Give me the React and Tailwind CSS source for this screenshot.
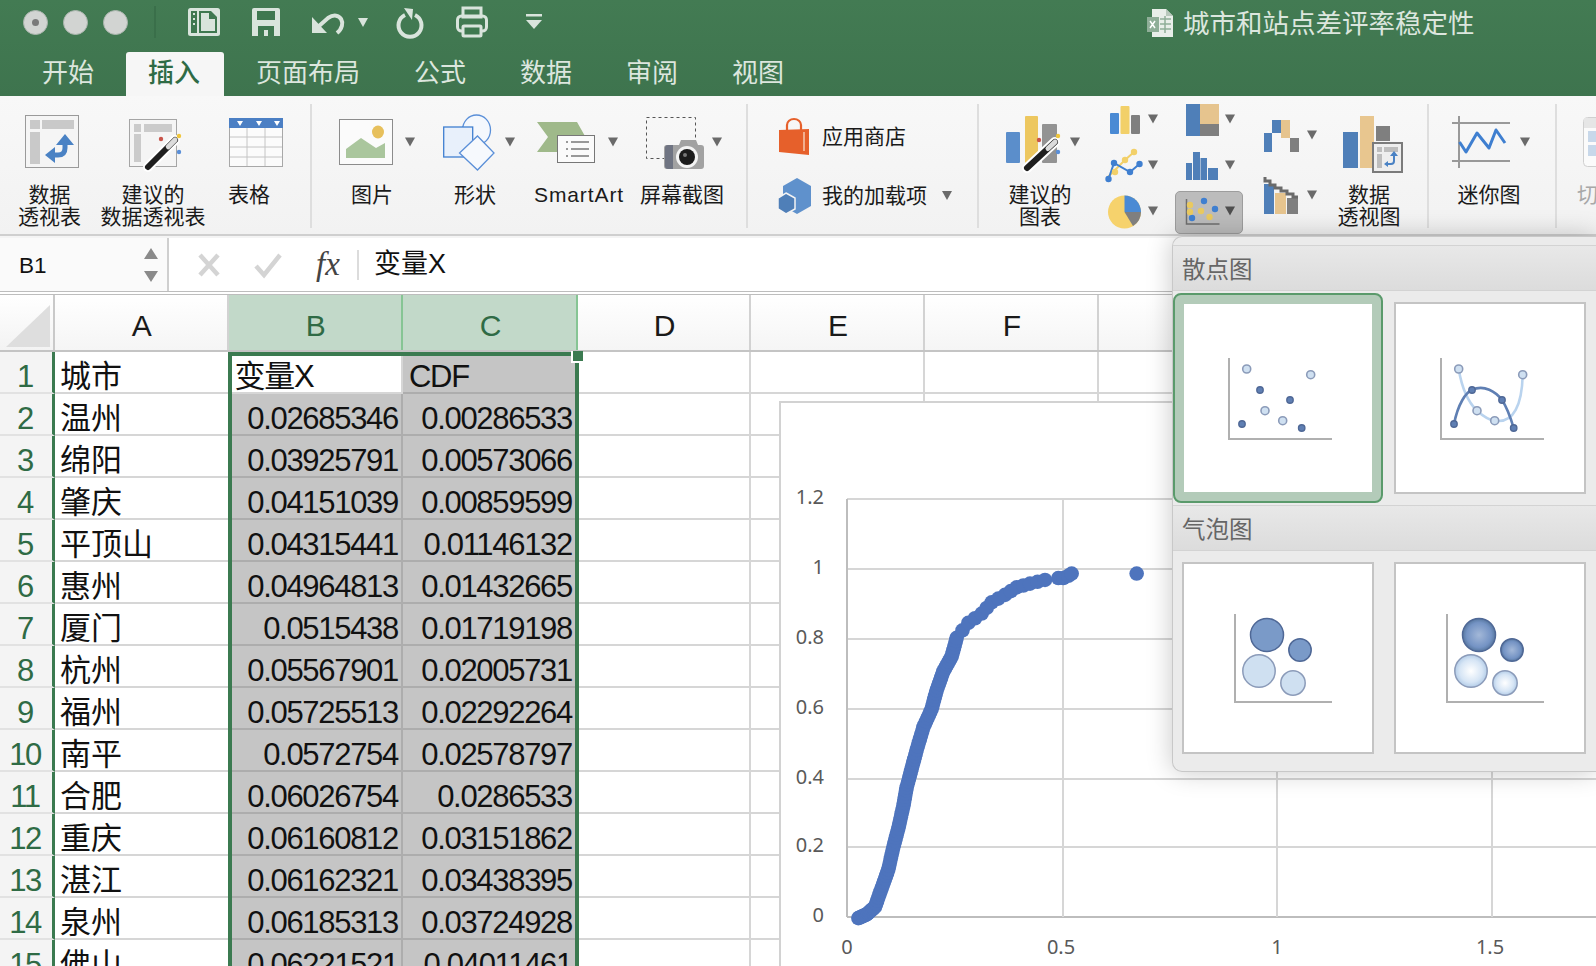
const F = "#d9e4dc";
const blue = "#4f7fb8", tan = "#e6c48e", gray = "#7f7f7f";

function Ic({ x, y, w, h, children }) {
  return <svg width={w} height={h} viewBox={`${x} ${y} ${w} ${h}`} className="block shrink-0">{children}</svg>;
}
function Caret({ x, y, c = "#6a6a6a" }) {
  return <path d={`M${x - 5} ${y - 4.5}h10l-5 9z`} fill={c} />;
}
function Sep({ cls }) {
  return <div className={`w-[2px] h-[124px] mt-[8px] bg-[#dedede] shrink-0 ${cls}`} />;
}
function Btn({ x, w, label, pad = "", children }) {
  return (
    <div className="shrink-0 flex flex-col pt-[8px]" style={{ width: w }}>
      <Ic x={x} y={104} w={w} h={80}>{children}</Ic>
      <div className={`text-center text-[21px] leading-[22px] text-[#1a1a1a] whitespace-nowrap ${pad}`}>
        {label.map((l) => <div key={l}>{l}</div>)}
      </div>
    </div>
  );
}
function Wand({ x1, y1, x2, y2 }) {
  return (
    <g strokeLinecap="round">
      <line x1={x1} y1={y1} x2={x2} y2={y2} stroke="#fff" strokeWidth="10" />
      <line x1={x1} y1={y1} x2={x2} y2={y2} stroke="#1f1f1f" strokeWidth="6" />
      <line x1={x1 + (x2 - x1) * 0.75} y1={y1 + (y2 - y1) * 0.75} x2={x2} y2={y2} stroke="#dcdcdc" strokeWidth="5" />
    </g>
  );
}
function Dots({ pts }) {
  return pts.map(([x, y, c], i) => <circle key={i} cx={x} cy={y} r="3.2" fill={c} />);
}

function TitleBar() {
  return (
    <div className="h-[55px] flex items-start relative">
      <div className="w-[156px] h-[44px] flex items-center shrink-0 relative">
        <div className="ml-[23px] w-[25px] h-[25px] rounded-full bg-[#d2d4d2] border border-[#aab5ad] flex items-center justify-center">
          <div className="w-[7px] h-[7px] rounded-full bg-[#7a7a7a]" />
        </div>
        <div className="ml-[15px] w-[25px] h-[25px] rounded-full bg-[#d2d4d2] border border-[#aab5ad]" />
        <div className="ml-[15px] w-[25px] h-[25px] rounded-full bg-[#d2d4d2] border border-[#aab5ad]" />
        <div className="absolute right-0 top-[6px] w-[2px] h-[32px] bg-[#3a6f4a]" />
      </div>
      <Ic x={156} y={0} w={400} h={44}>
        <rect x="188" y="8" width="32" height="28" rx="2.5" fill={F} />
        <path d="M199 11h12l6 6v16h-18z" fill="#3f7850" />
        <path d="M201 13h8v6h6v12h-14z" fill={F} />
        <rect x="191" y="11" width="6" height="22" fill="#3f7850" />
        <path d="M193 14h2M193 19h2M193 24h2" stroke={F} strokeWidth="2" />
        <path d="M252 10a2 2 0 0 1 2-2h24a2 2 0 0 1 2 2v26h-28z" fill={F} />
        <rect x="257" y="11" width="18" height="9" fill="#3f7850" />
        <rect x="258" y="26" width="16" height="10" fill="#3f7850" />
        <rect x="264" y="30" width="4" height="6" fill={F} />
        <path d="M312 17v16h15z" fill={F} />
        <path d="M319 26l9-8c12-8 20 6 9 15" fill="none" stroke={F} strokeWidth="4" />
        <path d="M358 18h10l-5 9z" fill={F} />
        <path d="M405 15a11.5 11.5 0 1 0 10 0" fill="none" stroke={F} strokeWidth="4" />
        <path d="M404 8l9 1-1 11z" fill={F} />
        <rect x="457.5" y="16" width="29" height="15" rx="4" fill="none" stroke={F} strokeWidth="3" />
        <rect x="463" y="8" width="18" height="9" fill="none" stroke={F} strokeWidth="3" />
        <rect x="463" y="26" width="18" height="10" rx="1" fill="#3f7850" stroke={F} strokeWidth="3" />
        <rect x="526" y="14" width="16" height="2.5" fill={F} />
        <path d="M526 20h16l-8 9z" fill={F} />
      </Ic>
      <div className="absolute left-[1147px] top-0 h-[46px] flex items-center">
        <Ic x={1147} y={6} w={28} h={32}>
          <path d="M1152 8h14l7 7v21h-21z" fill="#e8eee9" />
          <path d="M1166 8v7h7" fill="#b8c8bc" />
          <path d="M1160 18h11M1160 23h11M1160 28h11M1165 15v17" stroke="#8fae98" strokeWidth="1.5" />
          <rect x="1147" y="16" width="12" height="15" fill="#8fae98" />
          <path d="M1150 20l5 7M1155 20l-5 7" stroke="#fff" strokeWidth="1.5" />
        </Ic>
        <span className="ml-[8px] mt-[2px] text-[26.5px] text-[#dce6de] leading-none">城市和站点差评率稳定性</span>
      </div>
    </div>
  );
}

function Tabs() {
  const tabs = ["开始", "插入", "页面布局", "公式", "数据", "审阅", "视图"];
  return (
    <div className="h-[41px] flex items-end pl-[20px] gap-[10px]">
      {tabs.map((t) => (
        <div
          key={t}
          className={
            t === "插入"
              ? "h-[44px] -mt-[3px] pl-[22px] pr-[24px] bg-[#f6f6f6] rounded-t-[3px] text-[26px] leading-[42px] text-[#2f6b45] font-medium"
              : "h-[41px] px-[22px] text-[26px] leading-[36px] text-[#dce6de]"
          }
        >
          {t}
        </div>
      ))}
    </div>
  );
}

function Ribbon() {
  return (
    <div className="h-[140px] flex overflow-hidden bg-gradient-to-b from-[#f8f8f8] to-[#f2f2f2] border-b-2 border-[#cfcfcf]">
      <Btn x={0} w={99} label={["数据", "透视表"]}>
        <rect x="25.5" y="115.5" width="53" height="52" fill="#f5f5f5" stroke="#9a9a9a" />
        <path d="M30 120h10v9H30zM42 120h32v9H42zM30 132h10v32H30z" fill="#c9c9c9" />
        <path d="M65 142v6q0 7-7 7h-6" fill="none" stroke="#4a82c4" strokeWidth="5" />
        <path d="M65 134l9 11H56zM45 155l10-8v16z" fill="#4a82c4" />
      </Btn>
      <Btn x={99} w={108} label={["建议的", "数据透视表"]}>
        <rect x="129.5" y="119.5" width="47" height="47" fill="#f5f5f5" stroke="#a5a5a5" />
        <path d="M134 124h7v8h-7zM144 124h28v8h-28zM134 134h7v28h-7z" fill="#cbcbcb" />
        <Wand x1={148} y1={167} x2={175} y2={140} />
        <circle cx="161" cy="139" r="2.2" fill="#c9544a" />
        <circle cx="179" cy="136" r="2.2" fill="#f0c63c" />
        <circle cx="179" cy="152" r="2.2" fill="#5a8fd8" />
      </Btn>
      <Btn x={207} w={84} label={["表格"]}>
        <rect x="229.5" y="118.5" width="53" height="48" fill="#fbfbfb" stroke="#a8a8a8" />
        <rect x="229" y="118" width="54" height="10" fill="#4b7fc4" />
        <path d="M237 121h6l-3 5zM256 121h6l-3 5zM274 121h6l-3 5z" fill="#fff" />
        <path d="M247 128v38M265 128v38M230 137h52M230 147h52M230 157h52" stroke="#c4c4c4" />
      </Btn>
      <Sep cls="ml-[19px]" />
      <Btn x={312} w={120} label={["图片"]}>
        <rect x="339.5" y="119.5" width="53" height="45" fill="#fbfbfb" stroke="#8c8c8c" />
        <path d="M346 158v-9l15-11 15 10 9-5v15z" fill="#aac69d" />
        <ellipse cx="378" cy="132" rx="6" ry="6.5" fill="#e7c05c" />
        <Caret x={410} y={142} />
      </Btn>
      <Btn x={432} w={86} label={["形状"]}>
        <ellipse cx="476.5" cy="130" rx="14" ry="15" fill="#f4f8fd" stroke="#5a8fd8" strokeWidth="1.3" />
        <rect x="443.7" y="127" width="29" height="30" fill="#e8f0fb" stroke="#3f7fd0" strokeWidth="1.3" />
        <path d="M477.5 136l16.5 17-16.5 17-18-17z" fill="#f6f9fd" stroke="#5a8fd8" strokeWidth="1.3" />
        <Caret x={510} y={142} />
      </Btn>
      <Btn x={518} w={122} label={["SmartArt"]} pad="tracking-[0.9px]">
        <path d="M537 122h40l17 30h-57l11-15z" fill="#9fb98a" />
        <rect x="557.5" y="135.5" width="37" height="27" fill="#fbfbfb" stroke="#777" />
        <path d="M566 142h2M571 142h18M566 149h2M571 149h18M566 156h2M571 156h18" stroke="#999" strokeWidth="2" />
        <Caret x={613} y={142} />
      </Btn>
      <Btn x={640} w={84} label={["屏幕截图"]}>
        <rect x="646.5" y="117.5" width="49" height="41" fill="none" stroke="#555" strokeDasharray="3 3" />
        <path d="M667 145h12l2-5h15l2 5h3a3 3 0 0 1 3 3v18a3 3 0 0 1-3 3h-34a3 3 0 0 1-3-3v-18a3 3 0 0 1 3-3z" fill="#a2a2a2" />
        <path d="M665 148a3 3 0 0 1 3-3h5v24h-5a3 3 0 0 1-3-3z" fill="#6f7482" />
        <circle cx="687" cy="157" r="11" fill="#f4f4f4" />
        <circle cx="687" cy="157" r="8" fill="#1c1c1c" />
        <circle cx="685" cy="155" r="2" fill="#777" />
        <Caret x={717} y={142} />
      </Btn>
      <Sep cls="ml-[22px]" />
      <div className="w-[229px] shrink-0 flex flex-col">
        <div className="h-[59px] mt-[11px] flex items-center">
          <div className="ml-[31px]">
            <Ic x={779} y={115} w={31} h={40}>
              <path d="M787 128v-5a7 6 0 0 1 14 0v5" fill="none" stroke="#e6602b" strokeWidth="2.2" />
              <path d="M779 128l30-1v26l-30-3z" fill="#e6602b" />
              <path d="M804 130v19" stroke="#f6c9b0" strokeWidth="1.5" />
            </Ic>
          </div>
          <span className="ml-[12px] text-[21px] text-[#1a1a1a]">应用商店</span>
        </div>
        <div className="h-[59px] flex items-center">
          <div className="ml-[30px]">
            <Ic x={778} y={176} w={34} h={40}>
              <path d="M797 178l14 8v20l-14 8-14-8v-20z" fill="#5f91cc" />
              <path d="M786 193l9 5v11l-9 5-8-5v-11z" fill="#4f7fb8" stroke="#f4f4f4" strokeWidth="1.5" />
            </Ic>
          </div>
          <span className="ml-[10px] text-[21px] text-[#1a1a1a]">我的加载项</span>
          <svg width="12" height="10" viewBox="0 0 12 10" className="ml-[14px]"><path d="M1 0h10l-5 9z" fill="#6a6a6a" /></svg>
        </div>
      </div>
      <Sep cls="" />
      <Btn x={979} w={122} label={["建议的", "图表"]}>
        <rect x="1006" y="132" width="14" height="31" rx="1" fill="#5b8ecb" />
        <rect x="1025" y="116" width="13" height="47" rx="1" fill="#edc75f" />
        <rect x="1042" y="124" width="15" height="39" rx="1" fill="#939393" />
        <Wand x1={1027} y1={168} x2={1055} y2={142} />
        <circle cx="1039" cy="140" r="2.2" fill="#c9544a" />
        <circle cx="1058" cy="136" r="2.2" fill="#f0c63c" />
        <circle cx="1058" cy="152" r="2.2" fill="#5a8fd8" />
        <Caret x={1075} y={142} />
      </Btn>
      <div className="w-[74px] shrink-0 flex flex-col">
        <Ic x={1101} y={96} w={74} h={46}>
          <rect x="1110" y="113" width="9" height="21" rx="1" fill="#4a8ad4" />
          <rect x="1120.5" y="106" width="9" height="28" rx="1" fill="#f2d069" />
          <rect x="1131" y="115" width="9" height="19" rx="1" fill="#7f7f7f" />
          <Caret x={1153} y={119} />
        </Ic>
        <Ic x={1101} y={142} w={74} h={46}>
          <path d="M1107 178l18-18 9-8" fill="none" stroke="#f2d069" strokeWidth="2" />
          <path d="M1108.5 179l5.5-16 16 9 9.5-8" fill="none" stroke="#3f7fd0" strokeWidth="2" />
          <Dots pts={[[1115, 172, "#f2d069"], [1125, 160, "#f2d069"], [1134, 152, "#f2d069"], [1108.5, 179, "#3f7fd0"], [1114, 163, "#3f7fd0"], [1130, 172, "#3f7fd0"], [1139.5, 164, "#3f7fd0"]]} />
          <Caret x={1153} y={165} />
        </Ic>
        <Ic x={1101} y={188} w={74} h={46}>
          <circle cx="1124.5" cy="212" r="16.5" fill="#f6d26c" />
          <path d="M1124.5 212v-16.5a16.5 16.5 0 0 1 16.5 16.5z" fill="#4a8ad4" />
          <path d="M1124.5 212h16.5a16.5 16.5 0 0 1-8 14z" fill="#7f7f7f" />
          <Caret x={1153} y={211} />
        </Ic>
      </div>
      <div className="w-[68px] shrink-0 flex flex-col">
        <Ic x={1175} y={96} w={68} h={46}>
          <rect x="1186" y="104" width="14" height="32" fill={blue} />
          <rect x="1200" y="104" width="19" height="20" fill={tan} />
          <rect x="1200" y="124" width="19" height="12" fill={gray} />
          <Caret x={1230} y={119} />
        </Ic>
        <Ic x={1175} y={142} w={68} h={46}>
          <path d="M1186 163h6v17h-6zM1193 152h7v28h-7zM1200.5 158h6.5v22h-6.5zM1208 168h10v12h-10z" fill={blue} />
          <Caret x={1230} y={165} />
        </Ic>
        <div className="h-[43px] mt-[3px] w-[68px] rounded-[5px] bg-[#bcbcbc] border border-[#9d9d9d] overflow-hidden">
          <Ic x={1176} y={192} w={66} h={41}>
            <path d="M1186.5 199v25h33" fill="none" stroke="#6e6e6e" strokeWidth="1.5" />
            <Dots pts={[[1190, 205, "#e9c95f"], [1204, 201, "#3f7fd0"], [1201, 211, "#e9c95f"], [1215, 209, "#3f7fd0"], [1209.5, 217, "#e9c95f"], [1192, 218, "#3f7fd0"], [1190, 212, "#e9c95f"]]} />
            <Caret x={1230} y={211} c="#4e4e4e" />
          </Ic>
        </div>
      </div>
      <div className="w-[79px] shrink-0 flex flex-col pt-[9px]">
        <Ic x={1243} y={105} w={79} h={60}>
          <rect x="1264" y="133" width="8" height="19" fill={blue} />
          <rect x="1272" y="120" width="9" height="13" fill={blue} />
          <rect x="1281" y="120" width="9" height="18" fill={tan} />
          <rect x="1290" y="138" width="9" height="14" fill={gray} />
          <Caret x={1312} y={135} />
        </Ic>
        <Ic x={1243} y={165} w={79} h={60}>
          <rect x="1264" y="184" width="10" height="30" fill={blue} />
          <rect x="1275" y="193" width="11" height="21" fill={tan} />
          <rect x="1287" y="198" width="11" height="16" fill={gray} />
          <path d="M1265 177v4h5v4h5v3h6v3h6v3h6v3h5" fill="none" stroke="#6a6a6a" strokeWidth="3" />
          <Caret x={1312} y={195} />
        </Ic>
      </div>
      <Btn x={1322} w={94} label={["数据", "透视图"]}>
        <rect x="1343" y="132" width="15" height="36" fill={blue} />
        <rect x="1360" y="116" width="14" height="52" fill="#e8c68f" />
        <rect x="1376" y="126" width="14" height="15" fill={gray} />
        <rect x="1373" y="143" width="29" height="29" fill="#eeeeee" stroke="#7b7b7b" strokeWidth="2" />
        <path d="M1377 147h5v5h-5zM1384 147h14v5h-14zM1377 154h5v14h-5z" fill="#bdbdbd" />
        <path d="M1394 155v6q0 3-3 3h-4" fill="none" stroke="#4a82c4" strokeWidth="2" />
        <path d="M1394 151l4 5h-8zM1384 164l4-3v6z" fill="#4a82c4" />
      </Btn>
      <Sep cls="ml-[11px]" />
      <Btn x={1429} w={120} label={["迷你图"]}>
        <path d="M1452 123h58M1452 161h58M1459 116v52" stroke="#999" strokeWidth="2" />
        <path d="M1459.5 142l6.5 10 11-19 12 15 7-18 9 13" fill="none" stroke="#3f7fd0" strokeWidth="3" strokeLinejoin="round" />
        <Caret x={1525} y={142} />
      </Btn>
      <Sep cls="ml-[6px]" />
      <div className="w-[39px] shrink-0 flex flex-col pt-[8px]">
        <Ic x={1557} y={104} w={39} h={80}>
          <rect x="1583.5" y="117.5" width="40" height="49" rx="4" fill="#fbfbfb" stroke="#d0d0d0" />
          <rect x="1584" y="118" width="20" height="10" fill="#e6e6e6" />
          <rect x="1588" y="131" width="20" height="11" fill="#c8d8ea" />
          <rect x="1588" y="145" width="20" height="11" fill="#c8d8ea" />
        </Ic>
        <div className="pl-[20px] text-[21px] leading-[22px] text-[#a8a8a8] whitespace-nowrap">切</div>
      </div>
    </div>
  );
}

function FormulaBar() {
  return (
    <div className="h-[57px] flex bg-white border-b-[4px] border-double border-[#bdbdbd]">
      <div className="w-[169px] shrink-0 flex items-center justify-between pl-[19px] pr-[7px] border-r-2 border-[#cfcfcf] bg-[#fafafa]">
        <span className="text-[22.5px] mt-[3px] text-[#111]">B1</span>
        <svg width="16" height="34" viewBox="0 0 16 34" className="mr-[1px]"><path d="M8 0l7 11H1zM1 23h14l-7 11z" fill="#8a8a8a" /></svg>
      </div>
      <svg width="42" height="30" viewBox="0 0 30 30" className="ml-[20px] self-center"><path d="M5 5l18 20M23 5L5 25" stroke="#d4d4d4" strokeWidth="4.5" /></svg>
      <svg width="42" height="30" viewBox="0 0 30 30" className="ml-[16px] self-center"><path d="M3 16l8 9L27 5" fill="none" stroke="#d4d4d4" strokeWidth="4.5" /></svg>
      <span className="ml-[27px] self-center font-['Liberation_Serif',serif] italic text-[33px] leading-none text-[#444] w-[30px]">fx</span>
      <div className="ml-[11px] self-center w-[2px] h-[30px] bg-[#dcdcdc]" />
      <span className="ml-[15px] self-center text-[27px] leading-none text-[#111]">变量X</span>
    </div>
  );
}

const rows = [
  ["城市", "变量X", "CDF"],
  ["温州", "0.02685346", "0.00286533"],
  ["绵阳", "0.03925791", "0.00573066"],
  ["肇庆", "0.04151039", "0.00859599"],
  ["平顶山", "0.04315441", "0.01146132"],
  ["惠州", "0.04964813", "0.01432665"],
  ["厦门", "0.0515438", "0.01719198"],
  ["杭州", "0.05567901", "0.02005731"],
  ["福州", "0.05725513", "0.02292264"],
  ["南平", "0.0572754", "0.02578797"],
  ["合肥", "0.06026754", "0.0286533"],
  ["重庆", "0.06160812", "0.03151862"],
  ["湛江", "0.06162321", "0.03438395"],
  ["泉州", "0.06185313", "0.03724928"],
  ["佛山", "0.06221521", "0.04011461"],
];

function Sheet() {
  const heads = ["A", "B", "C", "D", "E", "F", "G"];
  const cols = "grid grid-cols-[55px_173.5px_174.5px_175px_173px_174px_174px_1fr]";
  return (
    <div>
      <div className={`${cols} h-[57px] border-b-2 border-[#c4c4c4]`}>
        <div className="bg-gradient-to-b from-white to-[#f3f3f3] border-r-2 border-[#c9c9c9] relative overflow-hidden">
          <svg width="52" height="55" className="block"><path d="M6 52L50 10v42z" fill="#dedede" /></svg>
        </div>
        {heads.map((h) => {
          const sel = h === "B" || h === "C";
          return (
            <div
              key={h}
              className={
                sel
                  ? "bg-[#c2d9c9] border-r-2 border-[#86c594] flex items-center justify-center pt-[5px] pl-[2px] text-[30px] text-[#2f6b45]"
                  : "bg-gradient-to-b from-white to-[#f5f5f5] border-r-2 border-[#d2d2d2] flex items-center justify-center pt-[5px] pl-[2px] text-[30px] text-[#1a1a1a]"
              }
            >
              {h}
            </div>
          );
        })}
        <div className="bg-gradient-to-b from-white to-[#f5f5f5]" />
      </div>
      {rows.map((r, i) => (
        <div key={i} className={`${cols} grid-rows-[42px] h-[42px]`}>
          <div className="bg-[#f4f4f4] border-r-[3px] border-[#3b7a50] border-b-2 border-b-[#e2e2e2] overflow-hidden flex items-center justify-center pt-[10px] leading-[30px] text-[31px] tracking-[-1.4px] text-[#2f6b45] pr-[2px]">
            {i + 1}
          </div>
          <div className="border-b-2 border-[#d6d6d6] overflow-hidden flex items-center pt-[10px] leading-[30px] pl-[5px] text-[31px] text-[#111] whitespace-nowrap">{r[0]}</div>
          <div className={`border-b-2 border-r-2 overflow-hidden flex items-center pt-[10px] leading-[30px] text-[31px] tracking-[-1.3px] text-[#111] whitespace-nowrap ${i === 0 ? "bg-white border-[#d6d6d6] pl-[6px]" : "bg-[#c5c5c5] border-[#adadad] justify-end pr-[3px]"}`}>{r[1]}</div>
          <div className={`bg-[#c5c5c5] border-b-2 border-[#adadad] overflow-hidden flex items-center pt-[10px] leading-[30px] text-[31px] tracking-[-1.3px] text-[#111] whitespace-nowrap ${i === 0 ? "pl-[6px]" : "justify-end pr-[6px]"}`}>{r[2]}</div>
          <div className="border-b-2 border-r-2 border-[#d6d6d6]" />
          <div className="border-b-2 border-r-2 border-[#d6d6d6]" />
          <div className="border-b-2 border-r-2 border-[#d6d6d6]" />
          <div className="border-b-2 border-r-2 border-[#d6d6d6]" />
          <div className="border-b-2 border-[#d6d6d6]" />
        </div>
      ))}
    </div>
  );
}

const trace = [[295,1440],[320,1430],[345,1410],[365,1360],[385,1310],[400,1250],[415,1200],[430,1140],[440,1090],[455,1040],[470,990],[490,930],[515,880],[530,830],[550,780],[575,740],[590,690],[625,650],[665,625],[695,595],[735,575],[770,555],[810,545],[855,535]];
const curve = [];
trace.forEach((p, i) => {
  const n = trace[i + 1];
  if (!n) { curve.push(p); return; }
  const steps = i > 15 ? 2 : 6;
  for (let k = 0; k < steps; k++) curve.push([p[0] + ((n[0] - p[0]) * k) / steps, p[1] + ((n[1] - p[1]) * k) / steps]);
});
const pts = [...curve, [895, 530], [910, 530], [925, 524], [935, 518], [1130, 518]].map(([x, y]) => [760 + x / 3, 380 + y / 2.676]);

function Chart() {
  const ys = [[499, "1.2"], [569, "1"], [639, "0.8"], [709, "0.6"], [779, "0.4"], [847, "0.2"], [917, "0"]];
  const xs = [[847, 847, "0"], [1063, 1061, "0.5"], [1277, 1277, "1"], [1492, 1490, "1.5"]];
  return (
    <div className="absolute left-[779px] top-[401px] w-[817px] h-[565px] bg-white border-l-2 border-t-2 border-[#d2d2d2]">
      <svg width="815" height="563" viewBox="781 403 815 563" className="block">
        {ys.map(([y, t]) => (
          <g key={t}>
            <line x1="847" x2="1596" y1={y} y2={y} stroke={t === "0" ? "#bdbdbd" : "#d6d6d6"} strokeWidth="2" />
            <text x="824" y={y + 5} textAnchor="end" fontSize="20" fill="#595959" fontFamily="Noto Sans">{t}</text>
          </g>
        ))}
        {xs.map(([x, lx, t]) => (
          <g key={t}>
            <line x1={x} x2={x} y1="499" y2="917" stroke={t === "0" ? "#bdbdbd" : "#d6d6d6"} strokeWidth="2" />
            <text x={lx} y="954" textAnchor="middle" fontSize="20" fill="#595959" fontFamily="Noto Sans">{t}</text>
          </g>
        ))}
        {pts.map(([x, y], i) => <circle key={i} cx={x} cy={y} r="7.3" fill="#4e74bd" />)}
      </svg>
    </div>
  );
}

const DK = "#5f7fb3", DKS = "#4f6896", LT = "#cfe0f1", LTS = "#8b9bb9";
function Axis({ x0 = 45, top = 54, bottom = 135 }) {
  return <path d={`M${x0} ${top}V${bottom}H148`} fill="none" stroke="#b0b0b0" strokeWidth="2" />;
}
function ScatterDots() {
  const d = [[76, 86], [106, 96], [58, 120], [117.7, 124]];
  const l = [[62.7, 65], [126.7, 70.7], [81, 106.7], [98.7, 116.7]];
  return (
    <>
      {l.map(([x, y], i) => <circle key={i} cx={x} cy={y} r="4" fill={LT} stroke={LTS} strokeWidth="1.6" />)}
      {d.map(([x, y], i) => <circle key={i} cx={x} cy={y} r="3.2" fill={DK} stroke={DKS} strokeWidth="1.4" />)}
    </>
  );
}
function Thumb({ children }) {
  return <svg width="188" height="188" viewBox="0 0 188 188" className="block">{children}</svg>;
}
function Bubbles({ dark, light }) {
  return (
    <>
      <Axis x0={51} top={50} bottom={138} />
      <circle cx="83" cy="71" r="16.5" fill={dark} stroke={DKS} strokeWidth="1.5" />
      <circle cx="116" cy="86" r="11.2" fill={dark} stroke={DKS} strokeWidth="1.5" />
      <circle cx="75" cy="107" r="16.2" fill={light} stroke={LTS} strokeWidth="1.5" />
      <circle cx="109" cy="119" r="12.2" fill={light} stroke={LTS} strokeWidth="1.5" />
    </>
  );
}
function SecHead({ t }) {
  return (
    <div className="h-[46px] bg-gradient-to-b from-[#e8e8e8] to-[#dcdcdc] border-t border-b border-[#d3d3d3] flex items-center pt-[5px] pl-[9px] text-[23.5px] text-[#666]">
      {t}
    </div>
  );
}
function Popup() {
  return (
    <div className="absolute left-[1172px] top-[236px] w-[424px] h-[536px] rounded-l-[10px] bg-[#ebebeb] border-l border-t border-b border-[#c8c8c8] shadow-[0_0_26px_rgba(0,0,0,0.22)] overflow-hidden">
      <div className="h-[8px]" />
      <SecHead t="散点图" />
      <div className="h-[214px] flex items-center">
        <div className="w-[210px] h-[210px] rounded-[8px] bg-[#b3cbb9] border-2 border-[#5a9a6b] flex items-center justify-center">
          <div className="bg-white"><Thumb><Axis /><ScatterDots /></Thumb></div>
        </div>
        <div className="ml-[11px] w-[192px] h-[192px] bg-white border-2 border-[#c4c4c4]">
          <Thumb>
            <Axis />
            <path d="M62.7 65C66 85 72 98 81 106.7C87 112 92 116 98.7 116.7C118 120 126 100 126.7 70.7" fill="none" stroke="#b9d3ee" strokeWidth="2.6" />
            <path d="M58 120C62 100 70 88 76 86C88 80 100 88 106 96C112 105 115 115 117.7 124" fill="none" stroke={DK} strokeWidth="2.6" />
            <ScatterDots />
          </Thumb>
        </div>
      </div>
      <SecHead t="气泡图" />
      <div className="flex pt-[11px]">
        <div className="ml-[9px] w-[192px] h-[192px] bg-white border-2 border-[#c4c4c4]">
          <Thumb><Bubbles dark="#7a9ac8" light={LT} /></Thumb>
        </div>
        <div className="ml-[20px] w-[192px] h-[192px] bg-white border-2 border-[#c4c4c4]">
          <Thumb>
            <defs>
              <radialGradient id="gd"><stop offset="0" stopColor="#a3b8d8" /><stop offset="0.75" stopColor="#7493c4" /><stop offset="1" stopColor="#57779f" /></radialGradient>
              <radialGradient id="gl"><stop offset="0" stopColor="#ffffff" /><stop offset="0.7" stopColor="#d6e5f5" /><stop offset="1" stopColor="#b4cde8" /></radialGradient>
            </defs>
            <Bubbles dark="url(#gd)" light="url(#gl)" />
          </Thumb>
        </div>
      </div>
    </div>
  );
}

export default function App() {
  return (
    <div className="relative w-[1596px] h-[966px] overflow-hidden bg-white font-['Liberation_Sans','Noto_Sans_CJK_SC',sans-serif]">
      <div className="h-[96px] bg-gradient-to-b from-[#437b53] to-[#3e744e]">
        <TitleBar />
        <Tabs />
      </div>
      <Ribbon />
      <div className="h-[2px] bg-[#f4f4f4]" />
      <FormulaBar />
      <Sheet />
      <Chart />
      <div className="absolute left-[228px] top-[352px] w-[351px] h-[660px] border-4 border-[#3b7a50] pointer-events-none" />
      <div className="absolute left-[571px] top-[351px] w-[12px] h-[12px] bg-[#3b7a50] border-2 border-white border-r-0 border-t-0" />
      <Popup />
    </div>
  );
}
